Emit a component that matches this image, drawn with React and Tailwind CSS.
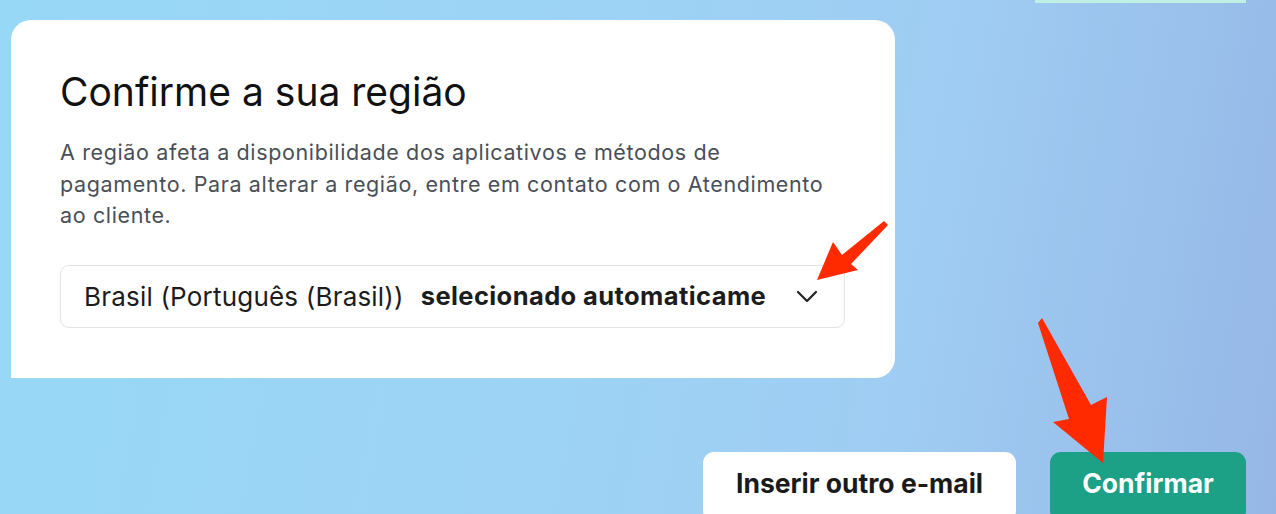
import React from "react";

export default function App() {
  return (
    <div
      className="relative w-[1276px] h-[514px] overflow-hidden bg-[linear-gradient(100deg,#97d8f6_0%,#9dd3f5_45%,#9fcdf3_70%,#96b7e6_100%)]"
      style={{ fontFamily: "Inter, 'Noto Sans', sans-serif" }}
    >
      <div className="flex flex-col h-full">
        <div className="flex justify-end pr-[30px] h-[3px] shrink-0">
          <div className="w-[211px] h-[3px] bg-[#bff0e2]" />
        </div>

        <div className="shrink-0 ml-[11px] mt-[17px] w-[884px] h-[358px] bg-white rounded-tl-[20px] rounded-tr-[20px] rounded-br-[20px] pl-[49px] pr-[30px] pt-[48px]">
          <h1 className="text-[39px] leading-[48px] text-[#111] font-normal tracking-[0px]">
            Confirme a sua região
          </h1>
          <p className="mt-[21px] text-[21.5px] leading-[31.5px] text-[#4a4f57] whitespace-nowrap tracking-[0.63px]">
            A região afeta a disponibilidade dos aplicativos e métodos de
            <br />
            pagamento. Para alterar a região, entre em contato com o Atendimento
            <br />
            ao cliente.
          </p>
          <div className="mt-[33px] w-[785px] h-[63px] border-[1.5px] border-[#e1e3e7] rounded-[9px] flex items-center pl-[23px] pr-[26px]">
            <span className="text-[26px] text-[#1c1c1c] whitespace-nowrap tracking-[0.2px]">
              Brasil (Português (Brasil))
            </span>
            <span className="ml-[17px] text-[25.5px] font-bold text-[#1c1c1c] whitespace-nowrap overflow-hidden w-[346px] shrink-0 tracking-[0.4px]">
              selecionado automaticamente
            </span>
            <div className="ml-auto">
              <svg width="22" height="13" viewBox="0 0 22 13">
                <polyline
                  points="2,2 11,11 20,2"
                  fill="none"
                  stroke="#222"
                  strokeWidth="2.2"
                  strokeLinecap="round"
                  strokeLinejoin="round"
                />
              </svg>
            </div>
          </div>
        </div>

        <div className="shrink-0 mt-[74px] flex justify-end gap-[34px] pr-[30px]">
          <button className="w-[313px] h-[70px] bg-white rounded-[11px] text-[26.5px] font-bold text-[#1a1a1a] pb-[6px]">
            Inserir outro e-mail
          </button>
          <button className="w-[196px] h-[70px] bg-[#1ca086] rounded-[11px] text-[26.5px] font-bold text-white pb-[6px]">
            Confirmar
          </button>
        </div>
      </div>

      <svg
        className="absolute left-0 top-0 pointer-events-none"
        width="1276"
        height="514"
        viewBox="0 0 1276 514"
      >
        <polygon
          points="817,280 833,242 842,255 884,221 888,225 851,264 858,270"
          fill="#ff2a00"
          strokeLinejoin="round"
        />
        <polygon
          points="1103,463 1053,422 1069,419 1038,323 1042,318 1091,405 1107,397"
          fill="#ff2a00"
          strokeLinejoin="round"
        />
      </svg>
    </div>
  );
}
